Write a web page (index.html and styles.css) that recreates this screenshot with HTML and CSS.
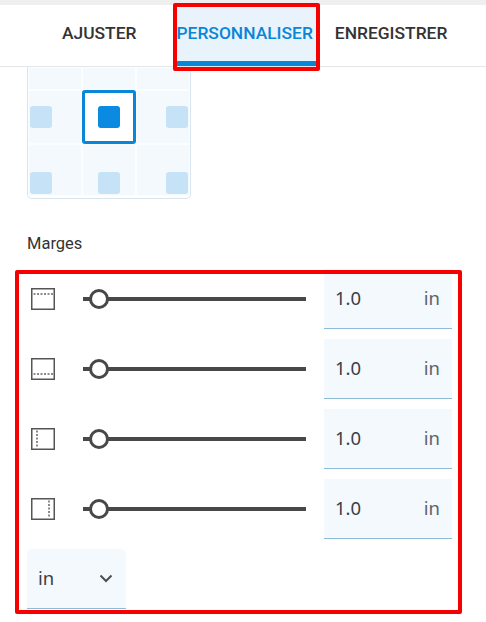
FILE: index.html
```html
<!DOCTYPE html>
<html lang="fr">
<head>
<meta charset="utf-8">
<title>Personnaliser</title>
<link rel="stylesheet" href="styles.css">
</head>
<body>
<div class="page">
  <nav class="tabs">
    <a class="tab tab-a">AJUSTER</a>
    <a class="tab tab-active">PERSONNALISER</a>
    <a class="tab tab-c">ENREGISTRER</a>
  </nav>
  <div class="callout callout-tab"></div>

  <div class="content">
    <div class="pos-grid">
      <div class="cell"></div><div class="cell"></div><div class="cell"></div>
      <div class="cell mark-left"><span class="dot"></span></div>
      <div class="cell cell-selected"><span class="dot dot-on"></span></div>
      <div class="cell mark-right"><span class="dot"></span></div>
      <div class="cell mark-left mark-bottom"><span class="dot"></span></div>
      <div class="cell mark-center mark-bottom"><span class="dot"></span></div>
      <div class="cell mark-right mark-bottom"><span class="dot"></span></div>
    </div>

    <h2 class="label">Marges</h2>

    <div class="margins">
      <div class="row">
        <svg class="icon" width="24" height="22" viewBox="0 0 24 22"><rect x="0.75" y="0.75" width="22.5" height="20.5" class="ic-box"/><line x1="2.5" y1="6" x2="22" y2="6" class="ic-dots"/></svg>
        <div class="slider"><span class="thumb"></span></div>
        <div class="field"><span>1.0</span><span class="unit">in</span></div>
      </div>
      <div class="row">
        <svg class="icon" width="24" height="22" viewBox="0 0 24 22"><rect x="0.75" y="0.75" width="22.5" height="20.5" class="ic-box"/><line x1="2.5" y1="16" x2="22" y2="16" class="ic-dots"/></svg>
        <div class="slider"><span class="thumb"></span></div>
        <div class="field"><span>1.0</span><span class="unit">in</span></div>
      </div>
      <div class="row">
        <svg class="icon" width="24" height="22" viewBox="0 0 24 22"><rect x="0.75" y="0.75" width="22.5" height="20.5" class="ic-box"/><line x1="6" y1="2.5" x2="6" y2="20" class="ic-dots"/></svg>
        <div class="slider"><span class="thumb"></span></div>
        <div class="field"><span>1.0</span><span class="unit">in</span></div>
      </div>
      <div class="row">
        <svg class="icon" width="24" height="22" viewBox="0 0 24 22"><rect x="0.75" y="0.75" width="22.5" height="20.5" class="ic-box"/><line x1="18" y1="2.5" x2="18" y2="20" class="ic-dots"/></svg>
        <div class="slider"><span class="thumb"></span></div>
        <div class="field"><span>1.0</span><span class="unit">in</span></div>
      </div>
      <div class="select">
        <span>in</span>
        <svg width="14" height="9" viewBox="0 0 14 9"><path d="M1.5 1.5 L7 7 L12.5 1.5" fill="none" stroke="#4a4f55" stroke-width="2"/></svg>
      </div>
    </div>
    <div class="callout callout-margins"></div>
  </div>
</div>
</body>
</html>
```
FILE: styles.css
```css
* { box-sizing: border-box; }
html, body { margin: 0; padding: 0; height: 100%; overflow: hidden; background: #fff; }
body { font-family: Roboto, "Liberation Sans", sans-serif; color: #303030; }
.page { position: relative; width: 486px; height: 622px; overflow: hidden; }

.tabs {
  display: flex;
  height: 67px;
  padding-left: 62px;
  border-top: 5px solid #efefef;
  border-bottom: 1px solid #e4e6e8;
  font-size: 17.4px;
  font-weight: 500;
}
.tab {
  display: flex;
  align-items: center;
  height: 61px;
  padding-bottom: 5px;
  white-space: nowrap;
  color: #333;
}
.tab-a { margin-right: 40px; }
.tab-active {
  padding: 0 3px 0 0;
  background: #e8f3fc;
  border-bottom: 5px solid #0a86d8;
  color: #0a86d8;
}
.tab-c { margin-left: 19px; }

.callout { position: absolute; border: 4px solid #f60000; border-radius: 2px; pointer-events: none; }
.callout-tab { left: 173px; top: 3px; width: 147px; height: 68px; }
.callout-margins { left: 15px; top: 270px; width: 447px; height: 344px; }

.content { padding-left: 27px; }

.pos-grid {
  display: grid;
  grid-template-columns: 54px 54px 54px;
  grid-template-rows: 23px 54px 52px;
  width: 164px;
  height: 132px;
  border: 1px solid #d8e5ef;
  border-top: 0;
  border-radius: 0 0 5px 5px;
  background: #fff;
}
.cell {
  display: flex;
  align-items: center;
  justify-content: center;
  background: #f4f9fd;
  border: 1px solid #fbfdff;
}
.dot { width: 22px; height: 22px; border-radius: 3px; background: #c5e2f6; }
.mark-left { justify-content: flex-start; padding-left: 1px; }
.mark-right { justify-content: flex-end; padding-right: 1px; }
.mark-center { justify-content: center; }
.mark-bottom { align-items: flex-end; padding-bottom: 1px; }
.cell-selected { background: #fff; border: 3px solid #0a86d8; border-radius: 3px; }
.dot-on { background: #0a8ae0; }

.label { margin: 36px 0 0; height: 38px; font-size: 16.5px; line-height: 18px; font-weight: 400; color: #333; }

.margins { display: flex; flex-direction: column; gap: 10px; margin-top: -4px; }
.row { display: flex; align-items: center; height: 60px; padding-left: 4px; }
.icon { flex: none; }
.ic-box { fill: #fff; stroke: #555; stroke-width: 1.5; }
.ic-dots { stroke: #666; stroke-width: 1.5; stroke-dasharray: 2 1.5; }

.slider { position: relative; flex: none; width: 223px; height: 4px; margin-left: 28px; background: #484848; }
.thumb {
  position: absolute;
  left: 6px;
  top: -8px;
  width: 20px;
  height: 20px;
  border: 3px solid #484848;
  border-radius: 50%;
  background: #fff;
}

.field {
  display: flex;
  justify-content: space-between;
  align-items: center;
  flex: none;
  width: 128px;
  height: 60px;
  margin-left: 18px;
  padding: 0 12px 3px 11px;
  background: #f4f9fd;
  border-bottom: 1px solid #8dbcd8;
  font-family: "Noto Sans", Roboto, sans-serif;
  font-size: 18.5px;
  color: #3c4043;
}
.unit { color: #5f6368; }

.select {
  display: flex;
  justify-content: space-between;
  align-items: center;
  width: 99px;
  height: 60px;
  padding: 0 13px 0 11px;
  background: #f4f9fd;
  border-bottom: 1px solid #8dbcd8;
  border-radius: 5px 5px 0 0;
  font-family: "Noto Sans", Roboto, sans-serif;
  font-size: 18.5px;
  color: #3c4043;
}
.select span { margin-bottom: 3px; }
```
